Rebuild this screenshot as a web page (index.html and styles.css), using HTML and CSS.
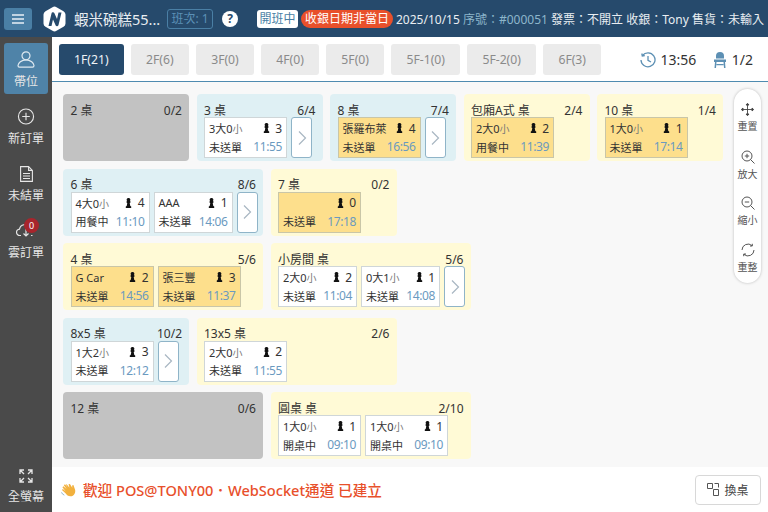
FILE: index.html
```html
<!DOCTYPE html>
<html lang="zh-Hant">
<head>
<meta charset="utf-8">
<title>POS</title>
<link rel="stylesheet" href="styles.css">
</head>
<body>
<svg class="defs" width="0" height="0" aria-hidden="true">
  <symbol id="pawn" viewBox="0 0 7 10"><path d="M3.500 0a1.800 1.800 0 0 1 1.300 3.100l.7.400v1l-.8.400.6 3 .9.600V10H.8V8.500l.9-.6.600-3-.8-.4v-1l.7-.4A1.800 1.800 0 0 1 3.500 0z"/></symbol>
  <symbol id="chev" viewBox="0 0 10 16"><path d="M2 1.500 8.500 8 2 14.500" fill="none" stroke="currentColor" stroke-width="1.200"/></symbol>
</svg>
<header class="topbar">
  <button class="menu-btn"><svg width="12" height="10" viewBox="0 0 12 10"><path d="M0 1h12M0 5h12M0 9h12" stroke="#e8f0f6" stroke-width="1.300"/></svg></button>
  <svg class="logo" width="23" height="26" viewBox="0 0 23 26"><path d="M9.500 1.200a4 4 0 0 1 4 0l7 4a4 4 0 0 1 2 3.400v8.800a4 4 0 0 1-2 3.400l-7 4a4 4 0 0 1-4 0l-7-4a4 4 0 0 1-2-3.400V8.600a4 4 0 0 1 2-3.400z" fill="#fff"/><path d="M5.500 20 8.500 7.500a1.500 1.500 0 0 1 2.800-.4l2.700 6 1.500-6.600h3L15.500 19a1.500 1.500 0 0 1-2.800.4L10 13.400 8.500 20z" fill="#264a6c"/></svg>
  <span class="shop">蝦米碗糕55...</span>
  <span class="shift">班次: 1</span>
  <span class="help">?</span>
  <span class="open">開班中</span>
  <span class="warn">收銀日期非當日</span>
  <span class="info">2025/10/15 <i>序號：#000051</i> 發票：不開立 收銀：Tony 售貨：未輸入</span>
</header>
<div class="main">
  <nav class="side">
    <a class="nav active"><svg width="18" height="17" viewBox="0 0 18 17" fill="none" stroke="#dfe9f0" stroke-width="1.200"><circle cx="9" cy="4.800" r="4"/><path d="M9 8.800c-4.500 0-8 3.500-8 5.800 0 1 .6 1.600 1.400 1.600h13.200c.8 0 1.400-.6 1.400-1.600 0-2.300-3.500-5.800-8-5.800z"/></svg><span>帶位</span></a>
    <a class="nav"><svg width="18" height="17" viewBox="0 0 18 18" fill="none" stroke="#e6e6e6" stroke-width="1.200"><circle cx="9" cy="9" r="8"/><path d="M9 5v8M5 9h8"/></svg><span>新訂單</span></a>
    <a class="nav"><svg width="13" height="16" viewBox="0 0 13 16" fill="none" stroke="#e6e6e6" stroke-width="1.100"><path d="M.6.6h8l3.800 3.800v11H.6zM8.600.6v3.800h3.800M3 7.500h7M3 10h7M3 12.500h7"/></svg><span>未結單</span></a>
    <a class="nav cloud"><svg width="20" height="14" viewBox="0 0 20 14" fill="none" stroke="#e6e6e6" stroke-width="1.200"><path d="M5 12.500H4a3.200 3.200 0 0 1-.5-6.400 5.500 5.500 0 0 1 10-2M15 12.500h1.500"/><path d="M10 6v7M7.500 10.500 10 13l2.500-2.500"/></svg><em class="badge">0</em><span>雲訂單</span></a>
    <a class="nav full"><svg width="14" height="14" viewBox="0 0 14 14" fill="none" stroke="#e6e6e6" stroke-width="1.300"><path d="M1 5V1h4M1 1l4 4M13 5V1H9M13 1 9 5M1 9v4h4M1 13l4-4M13 9v4H9M13 13 9 9"/></svg><span>全螢幕</span></a>
  </nav>
  <div class="body">
    <div class="tabs">
      <a class="tab on">1F(21)</a><a class="tab">2F(6)</a><a class="tab">3F(0)</a><a class="tab">4F(0)</a><a class="tab">5F(0)</a><a class="tab">5F-1(0)</a><a class="tab">5F-2(0)</a><a class="tab">6F(3)</a>
      <span class="stat stat-time"><svg width="16" height="16" viewBox="0 0 16 16" fill="none" stroke="#5d90b4" stroke-width="1.300"><path d="M2.500 3.500A7 7 0 1 1 1 8M1.800 1.500l.5 2.500 2.500-.3M8 4v4.300l3 1.700"/></svg>13:56</span>
      <span class="stat stat-seat"><svg width="14" height="16" viewBox="0 0 14 16" fill="#5d90b4"><path d="M3 6.500V4a4 4 0 0 1 8 0v2.500zM1 7.500h12v2.500H1zM2 10h1.500L3 16H1.500zM10.500 10H12l.5 6H11zM3.500 12h7v1.300h-7z"/></svg>1/2</span>
    </div>
    <section class="floor">
      <div class="row">
        <article class="table gray"><h3><span>2 桌</span><span>0/2</span></h3></article>
        <article class="table blue"><h3><span>3 桌</span><span>6/4</span></h3><div class="tickets">
          <div class="tk"><p><b>3大0<small>小</small></b><span class="pp"><svg class="pawn"><use href="#pawn"/></svg>3</span></p><p><span>未送單</span><time>11:55</time></p></div>
          <a class="more"><svg width="10" height="16"><use href="#chev"/></svg></a></div></article>
        <article class="table blue"><h3><span>8 桌</span><span>7/4</span></h3><div class="tickets">
          <div class="tk hot"><p><b>張羅布萊</b><span class="pp"><svg class="pawn"><use href="#pawn"/></svg>4</span></p><p><span>未送單</span><time>16:56</time></p></div>
          <a class="more"><svg width="10" height="16"><use href="#chev"/></svg></a></div></article>
        <article class="table yellow"><h3><span>包廂A式 桌</span><span>2/4</span></h3><div class="tickets">
          <div class="tk hot"><p><b>2大0<small>小</small></b><span class="pp"><svg class="pawn"><use href="#pawn"/></svg>2</span></p><p><span>用餐中</span><time>11:39</time></p></div></div></article>
        <article class="table yellow"><h3><span>10 桌</span><span>1/4</span></h3><div class="tickets">
          <div class="tk hot"><p><b>1大0<small>小</small></b><span class="pp"><svg class="pawn"><use href="#pawn"/></svg>1</span></p><p><span>未送單</span><time>17:14</time></p></div></div></article>
      </div>
      <div class="row">
        <article class="table blue wide"><h3><span>6 桌</span><span>8/6</span></h3><div class="tickets">
          <div class="tk slim"><p><b>4大0<small>小</small></b><span class="pp"><svg class="pawn"><use href="#pawn"/></svg>4</span></p><p><span>用餐中</span><time>11:10</time></p></div>
          <div class="tk slim"><p><b>AAA</b><span class="pp"><svg class="pawn"><use href="#pawn"/></svg>1</span></p><p><span>未送單</span><time>14:06</time></p></div>
          <a class="more"><svg width="10" height="16"><use href="#chev"/></svg></a></div></article>
        <article class="table yellow"><h3><span>7 桌</span><span>0/2</span></h3><div class="tickets">
          <div class="tk hot"><p><b></b><span class="pp"><svg class="pawn"><use href="#pawn"/></svg>0</span></p><p><span>未送單</span><time>17:18</time></p></div></div></article>
      </div>
      <div class="row">
        <article class="table yellow wide"><h3><span>4 桌</span><span>5/6</span></h3><div class="tickets">
          <div class="tk hot"><p><b>G Car</b><span class="pp"><svg class="pawn"><use href="#pawn"/></svg>2</span></p><p><span>未送單</span><time>14:56</time></p></div>
          <div class="tk hot"><p><b>張三豐</b><span class="pp"><svg class="pawn"><use href="#pawn"/></svg>3</span></p><p><span>未送單</span><time>11:37</time></p></div></div></article>
        <article class="table yellow wide"><h3><span>小房間 桌</span><span>5/6</span></h3><div class="tickets">
          <div class="tk slim"><p><b>2大0<small>小</small></b><span class="pp"><svg class="pawn"><use href="#pawn"/></svg>2</span></p><p><span>未送單</span><time>11:04</time></p></div>
          <div class="tk slim"><p><b>0大1<small>小</small></b><span class="pp"><svg class="pawn"><use href="#pawn"/></svg>1</span></p><p><span>未送單</span><time>14:08</time></p></div>
          <a class="more"><svg width="10" height="16"><use href="#chev"/></svg></a></div></article>
      </div>
      <div class="row">
        <article class="table blue"><h3><span>8x5 桌</span><span>10/2</span></h3><div class="tickets">
          <div class="tk"><p><b>1大2<small>小</small></b><span class="pp"><svg class="pawn"><use href="#pawn"/></svg>3</span></p><p><span>未送單</span><time>12:12</time></p></div>
          <a class="more"><svg width="10" height="16"><use href="#chev"/></svg></a></div></article>
        <article class="table yellow wide"><h3><span>13x5 桌</span><span>2/6</span></h3><div class="tickets">
          <div class="tk"><p><b>2大0<small>小</small></b><span class="pp"><svg class="pawn"><use href="#pawn"/></svg>2</span></p><p><span>未送單</span><time>11:55</time></p></div></div></article>
      </div>
      <div class="row">
        <article class="table gray wide"><h3><span>12 桌</span><span>0/6</span></h3></article>
        <article class="table yellow wide"><h3><span>圓桌 桌</span><span>2/10</span></h3><div class="tickets">
          <div class="tk"><p><b>1大0<small>小</small></b><span class="pp"><svg class="pawn"><use href="#pawn"/></svg>1</span></p><p><span>開桌中</span><time>09:10</time></p></div>
          <div class="tk"><p><b>1大0<small>小</small></b><span class="pp"><svg class="pawn"><use href="#pawn"/></svg>1</span></p><p><span>開桌中</span><time>09:10</time></p></div></div></article>
      </div>
      <aside class="tools">
        <a class="tool"><svg width="13" height="13" viewBox="0 0 13 13" fill="#444" stroke="#444" stroke-width=".9"><path d="M6.500 1v11M1 6.500h11" fill="none"/><path d="M6.500.3 8 2H5zM6.500 12.700 8 11H5zM.3 6.500 2 5v3zM12.700 6.500 11 5v3z"/></svg><span>重置</span></a>
        <a class="tool"><svg width="14" height="14" viewBox="0 0 14 14" fill="none" stroke="#555" stroke-width="1"><circle cx="6" cy="6" r="5"/><path d="M9.500 9.500 13.500 13.500M3.800 6h4.400M6 3.800v4.400"/></svg><span>放大</span></a>
        <a class="tool"><svg width="14" height="14" viewBox="0 0 14 14" fill="none" stroke="#555" stroke-width="1"><circle cx="6" cy="6" r="5"/><path d="M9.500 9.500 13.500 13.500M3.800 6h4.400"/></svg><span>縮小</span></a>
        <a class="tool"><svg width="14" height="14" viewBox="0 0 14 14" fill="none" stroke="#555" stroke-width="1"><path d="M1 7a6 6 0 0 1 10-4.400M13 7a6 6 0 0 1-10 4.400M11.300.8v2.200H9M2.700 13.200V11H5"/></svg><span>重整</span></a>
      </aside>
    </section>
    <footer class="foot">
      <svg class="wave" width="16" height="15" viewBox="0 0 17 16"><path d="M6 2.500 9 6 8 2.500 9.500 2l2.500 4-.2-2.300 1.400-.4 1.800 5c.8 3-1 7-5 7-2.500 0-4-1.500-5-3L1 8.500l1-1 3 2.500-3.500-4.500 1-1 3.500 3L3 3.500l1.200-1 3 3.500-2-3z" fill="#f2b13e"/><path d="M.5 11c.5 1.500 1.500 2.500 3 3" fill="none" stroke="#8fb4c8"/></svg>
      <span class="msg">歡迎 POS@TONY00．WebSocket通道 已建立</span>
      <button class="swap"><svg width="13" height="13" viewBox="0 0 13 13" fill="none" stroke="#555" stroke-width="1"><path d="M.5.5h5v5h-5zM6.500 6.500h5v6h-5zM7.500.5h4v4"/></svg>換桌</button>
    </footer>
  </div>
</div>
</body>
</html>
```
FILE: styles.css
```css
* { box-sizing: border-box; }
html, body { margin: 0; width: 768px; height: 512px; overflow: hidden; }
body { font-family: "Noto Sans", "Noto Sans CJK TC", sans-serif; font-size: 12px; color: #333; background: #fff; }
.defs { position: absolute; }
p, h3 { margin: 0; font-weight: 400; }

.topbar { height: 37px; background: #264a6c; display: flex; align-items: center; padding-left: 4px; color: #fff; white-space: nowrap; }
.menu-btn { width: 28px; height: 22px; border: 0; border-radius: 3px; background: #4a7fa5; display: flex; align-items: center; justify-content: center; padding: 0; margin-right: 11px; }
.logo { margin-right: 8px; }
.shop { font-size: 14.500px; width: 93px; color: #e9eef2; }
.shift { width: 46px; height: 20px; border: 1px solid #4a7fa5; border-radius: 3px; color: #5c90b6; font-size: 12px; line-height: 18px; text-align: center; margin-right: 9px; }
.help { width: 16px; height: 16px; border-radius: 50%; background: #fff; color: #264a6c; font-weight: 700; font-size: 12px; line-height: 16px; text-align: center; margin-right: 19px; }
.open { width: 41px; height: 18px; background: #fff; color: #4a7fa5; border-radius: 3px; font-size: 12px; line-height: 18px; text-align: center; margin-right: 3px; }
.warn { width: 92px; height: 18px; background: #e8502b; color: #fff; border-radius: 9px; font-size: 12px; line-height: 18px; text-align: center; margin-right: 3px; }
.info { font-size: 12px; color: #e9eef2; }
.info i { font-style: normal; color: #8db6cb; }

.main { display: flex; height: 475px; }
.side { width: 52px; background: #4a4a4a; display: flex; flex-direction: column; align-items: center; padding-top: 6px; flex: none; }
.nav { width: 44px; height: 51px; display: flex; flex-direction: column; align-items: center; justify-content: flex-end; padding-bottom: 4px; color: #e6e6e6; font-size: 12px; line-height: 17px; border-radius: 3px; position: relative; margin-bottom: 6px; flex: none; }
.nav.active { background: #4f83a8; }
.nav svg { margin-bottom: 5px; }
.nav.cloud svg { margin-bottom: 7px; }
.nav.full { margin-top: auto; margin-bottom: 3px; }
.badge { position: absolute; left: 20px; top: 4px; width: 15px; height: 15px; border-radius: 50%; background: #a8252c; color: #fff; font-style: normal; font-size: 9px; line-height: 15px; text-align: center; }

.body { flex: 1; display: flex; flex-direction: column; min-width: 0; }
.tabs { height: 45px; border-bottom: 1px solid #4f8bb0; display: flex; align-items: flex-start; padding: 7px 0 0 7px; gap: 7.500px; }
.tab { height: 31px; padding: 0 15px; background: #ebebeb; color: #8a8a8a; border-radius: 3px; font-size: 12.200px; line-height: 31px; white-space: nowrap; }
.tab.on { background: #264a6c; color: #eef3f6; }
.stat { display: flex; align-items: center; gap: 5px; font-size: 14px; height: 31px; color: #333; }
.stat-time { margin-left: 31px; }
.stat-seat { margin-left: 9px; }

.floor { flex: 1; background: #f8f8f8; padding: 12px 0 0 11px; position: relative; }
.row { display: flex; gap: 7.500px; margin-bottom: 7.500px; }
.table { width: 126px; height: 67px; border-radius: 4px; padding: 7.500px 7px 0 7.500px; }
.table.wide { width: 200px; }
.gray { background: #c2c2c2; }
.blue { background: #dff0f4; }
.yellow { background: #fffad6; }
h3 { display: flex; justify-content: space-between; font-size: 12px; line-height: 17px; height: 15.500px; color: #333; }
.tickets { display: flex; gap: 4px; }
.tk { width: 83px; height: 41px; background: #fff; border: 1px solid #cfd6d8; padding: 1px 4px 0 4px; font-size: 11px; flex: none; }
.tk.slim { width: 79px; }
.tk.hot { background: #fddf8c; border-color: #c9c6a8; }
.tk p { display: flex; justify-content: space-between; align-items: center; height: 18.500px; white-space: nowrap; }
.tk b { font-weight: 400; }
.tk small { font-size: 10px; color: #777; }
.pp { display: flex; align-items: center; gap: 5.500px; font-size: 12px; }
.pawn { width: 7px; height: 10px; fill: #111; }
.tk time { color: #6b9abf; font-size: 12px; letter-spacing: -.4px; }
.more { width: 21px; height: 41px; background: #fff; border: 1px solid #8fb4c8; border-radius: 3px; display: flex; align-items: center; justify-content: center; color: #a8b6c2; flex: none; }

.tools { position: absolute; right: 7px; top: 7px; width: 27px; height: 194px; background: #fff; border-radius: 14px; box-shadow: 0 0 3px rgba(0,0,0,.25); display: flex; flex-direction: column; align-items: center; padding-top: 14px; gap: 8.500px; }
.tool { display: flex; flex-direction: column; align-items: center; font-size: 10px; line-height: 13px; color: #555; gap: 4px; height: 38px; }

.foot { height: 45px; background: #fff; display: flex; align-items: center; padding: 0 7px 0 9px; }
.wave { margin-right: 6px; }
.msg { color: #e8502b; font-size: 14.600px; font-weight: 500; flex: 1; white-space: nowrap; }
.swap { width: 66px; height: 30px; border: 1px solid #d8d8d8; border-radius: 4px; background: #fff; color: #444; font: inherit; font-size: 12px; display: flex; align-items: center; justify-content: center; gap: 4px; padding: 0; }
```
